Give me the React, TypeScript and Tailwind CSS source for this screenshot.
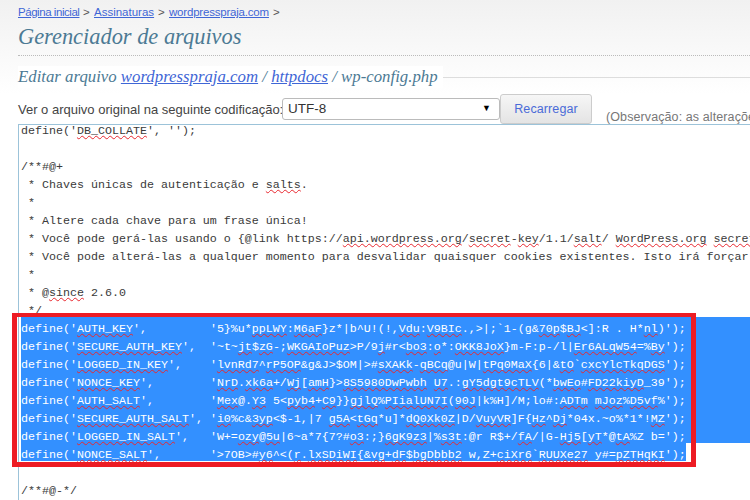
import React from "react";

function Marked({ text }: { text: string }) {
  const parts = text.split(/(«[^»]*»)/);
  return (
    <>
      {parts.map((p, i) =>
        p.startsWith("«") ? (
          <span key={i} className="underline decoration-wavy decoration-[#e8282f] decoration-1 underline-offset-[1px] [text-decoration-skip-ink:none]">
            {p.slice(1, -1)}
          </span>
        ) : (
          <span key={i}>{p}</span>
        )
      )}
    </>
  );
}

const before = [
  "define('«DB_COLLATE»', '');",
  "",
  "/**#@+",
  " * Chaves únicas de autenticação e «salts».",
  " *",
  " * Altere cada chave para um frase única!",
  " * Você pode gerá-las usando o {@link https://«api.wordpress.org»/«secret»-«key»/1.1/«salt»/ «WordPress.org» «secret-key» service}",
  " * Você pode alterá-las a qualquer momento para desvalidar quaisquer cookies existentes. Isto irá forçar todos os usuários a fazerem login novamente.",
  " *",
  " * @«since» 2.6.0",
  " */",
];

const keys = [
  "define('«AUTH_KEY»',         '5}%u*«ppLWY»:«M6aF»}z*|b^U!(!,«Vdu»:«V9BIc».,>|;`1-(g&«70p»$«BJ»<]:R . H*«nl»)');",
  "define('«SECURE_AUTH_KEY»',  '~t~«jt»$«zG»-;«WKGAIoPuz»>P/9«j»#r<«bo3»:«o»*:«OKK8JoX»}m-F:p-/l|«Er6ALqW54»=%«By»');",
  "define('«LOGGED_IN_KEY»',    '«lvnRd7»^«rP5OP»&g&J>$OM|>#«sXAKk»-«qBCq»@u|W|«tPq0MaX»{6|&«tO»`«cxcYlcTkqDGS»');",
  "define('«NONCE_KEY»',        '«NrD».«xk6a»+/«Wj»[«amH»}>«8S5980DwPwbh» «U7».:«gY5dgt9cTLV»(*«bwEo»#«FD22kiyD»_39');",
  "define('«AUTH_SALT»',        '«Mex»@.«Y3» 5<«pyb4»+«C9»}}«gjlQ»%«PIialUN7I»(«90J»|k%H]/M;lo#:«ADTm» «mJoz»%«D5vf»%');",
  "define('«SECURE_AUTH_SALT»', '«i0»%c&«3yp»<$-1,|7 «g5A»<«tGq»*u]*«dQ0Xk0Z»|D/«VuyVR»]F{«Hz»^«Dj»*04x.~o%*1*!«MZ»');",
  "define('«LOGGED_IN_SALT»',   'W+=«ozy»@«5u»|6~a*7{7?#«o3»:;}«6gK9z3»|%«s3t»:@r R$+/«fA»/|G-«Hj5»[«yT»*@«tA»%Z b=');",
  "define('«NONCE_SALT»',       '>7OB>#«y6»^<(«r».«lxSDiWI»{&«vg»+«dF»$«bgDbbb2» w,Z+«ciXr6»`«RUUXe27» y#=«pZTHqKI»');",
];

const row = "h-[18px] leading-[24px] whitespace-pre";

export default function App() {
  return (
    <div className="relative w-[750px] h-[500px] overflow-hidden bg-white font-['Liberation_Sans',sans-serif]">
      <div className="bg-gradient-to-b from-[#f1f1f1] to-white pl-[18px] h-[94px]">
        <div className="flex pt-[5px] text-[11.5px] leading-[15px] text-[#555]">
          <a className="w-[61px] tracking-[-0.45px] text-[#3f66d6] underline whitespace-nowrap">Página inicial</a>
          <span className="ml-[4px] w-[11px]">&gt;</span>
          <a className="w-[59px] text-[#3f66d6] underline">Assinaturas</a>
          <span className="ml-[5px] w-[11px]">&gt;</span>
          <a className="w-[100px] tracking-[-0.2px] text-[#3f66d6] underline">wordpresspraja.com</a>
          <span className="ml-[4px]">&gt;</span>
        </div>
        <h1 className="mt-[5px] h-[31px] border-b border-dotted border-[#bbb] font-['Liberation_Serif',serif] text-[22.4px] leading-[24px] italic text-[#4c7a94]">
          Gerenciador de arquivos
        </h1>
        <div className="flex items-center mt-[10px]">
          <h2 className="pr-[5px] bg-white font-['Liberation_Serif',serif] text-[16.8px] leading-[22px] italic text-[#4c7a94]">
            Editar arquivo <a className="text-[#3f66d6] underline">wordpresspraja.com</a> / <a className="text-[#3f66d6] underline">httpdocs</a> / wp-config.php
          </h2>
          <div className="flex-1 h-px bg-[#ddd]" />
        </div>
      </div>
      <div className="flex items-start pl-[18px] h-[30px] whitespace-nowrap">
        <span className="shrink-0 w-[263px] mt-[7px] text-[13px] leading-[18px] text-[#444]">Ver o arquivo original na seguinte codificação:</span>
        <div className="shrink-0 ml-[1px] mt-[4px] flex items-center justify-between w-[218px] h-[22px] px-[5px] border border-[#bbb] rounded-[3px] bg-white text-[13.5px] text-[#333]">
          <span>UTF-8</span>
          <span className="mr-[3px] text-[9px] text-black">▼</span>
        </div>
        <button className="shrink-0 w-[92px] h-[30px] border border-[#ccc] rounded-[3px] bg-gradient-to-b from-[#f6f6f6] to-[#e4e4e4] text-[12.5px] tracking-[0.1px] text-[#4a6bd8]">
          Recarregar
        </button>
        <span className="shrink-0 ml-[14px] mt-[15px] text-[12.5px] leading-[16px] tracking-[0.1px] text-[#777]">(Observação: as alterações</span>
      </div>
      <div className="ml-[18px] h-[376px] border-l border-t border-[#9cc3d9] overflow-hidden pl-[2px] bg-white font-['Liberation_Mono',monospace] text-[11.667px] text-[#3a3a3a]">
        <div className="-mt-[6px]">
          {before.map((l, i) => (
            <div key={i} className={row}>
              <Marked text={l} />
            </div>
          ))}
          {keys.map((l, i) => (
            <div key={i} className={`${row} bg-[#3390ff] text-white ${i === 7 ? "w-fit" : ""}`}>
              <Marked text={l} />
            </div>
          ))}
          <div className={row} />
          <div className={row}>/**#@-*/</div>
        </div>
      </div>
      <div className="absolute left-[12px] top-[313px] w-[684px] h-[154px] border-x-[5px] border-t-4 border-b-[5px] border-[#ed1c24]" />
    </div>
  );
}
